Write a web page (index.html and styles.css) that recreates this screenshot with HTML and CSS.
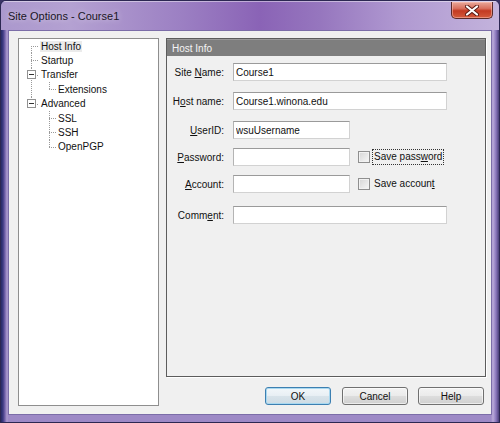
FILE: index.html
```html
<!doctype html>
<html>
<meta name="viewport" content="width=device-width, initial-scale=1">

<head>
  <title>Site Options - Course1</title>
  <link rel="stylesheet" href="styles.css">
</head>

<body>
  <div class="window">
    <div class="titlebar">
      <span class="title">Site Options - Course1</span>
      <span class="close">
        <svg width="14" height="11" viewBox="0 0 14 11">
          <path d="M2 1.5 L12 9.5 M12 1.5 L2 9.5" stroke="#5a1a14" stroke-width="4" stroke-linecap="round" />
          <path d="M2 1.5 L12 9.5 M12 1.5 L2 9.5" stroke="#ffffff" stroke-width="2.2" stroke-linecap="round" />
        </svg>
      </span>
    </div>
    <div class="client">
      <!-- settings tree -->
      <div class="tree">
        <div class="node root first"><span class="sel">Host Info</span></div>
        <div class="node root">Startup</div>
        <div class="node root toggled"><i class="toggle"></i>Transfer</div>
        <div class="group cont">
          <div class="node child last">Extensions</div>
        </div>
        <div class="node root toggled last"><i class="toggle"></i>Advanced</div>
        <div class="group">
          <div class="node child">SSL</div>
          <div class="node child">SSH</div>
          <div class="node child last">OpenPGP</div>
        </div>
      </div>
      <div class="main">
        <div class="panel">
          <div class="panel-head">Host Info</div>
          <form class="form" name="hostinfo">
            <div class="field">
              <label>Site <u>N</u>ame:</label>
              <input type="text" class="wide" value="Course1">
            </div>
            <div class="field">
              <label>H<u>o</u>st name:</label>
              <input type="text" class="wide" value="Course1.winona.edu">
            </div>
            <div class="field">
              <label><u>U</u>serID:</label>
              <input type="text" class="short" value="wsuUsername">
            </div>
            <div class="field tight">
              <label><u>P</u>assword:</label>
              <input type="password" class="short">
              <span class="check"></span>
              <span class="check-label focus">Save pass<u>w</u>ord</span>
            </div>
            <div class="field tight">
              <label><u>A</u>ccount:</label>
              <input type="text" class="short">
              <span class="check"></span>
              <span class="check-label">Save accoun<u>t</u></span>
            </div>
            <div class="field loose">
              <label>Comm<u>e</u>nt:</label>
              <input type="text" class="wide">
            </div>
          </form>
        </div>
        <div class="buttons">
          <button class="btn default">OK</button>
          <button class="btn">Cancel</button>
          <button class="btn">Help</button>
        </div>
      </div>
    </div>
  </div>
</body>

</html>
```

FILE: styles.css
```css
html,
body {
  margin: 0;
  padding: 0;
  background: #3a3366;
}

body {
  font: 10px "Liberation Sans", Arial, sans-serif;
  color: #111;
}

/* Window frame */
.window {
  width: 500px;
  height: 423px;
  box-sizing: border-box;
  border: 1px solid #2c2752;
  border-radius: 6px 6px 0 0;
  display: flex;
  flex-direction: column;
  overflow: hidden;
  background: linear-gradient(to right, #262a66 0, #3e3a82 2px, #7664ac 4px, #ad9dd0 6px, #9d89c6 7px,
      #9d89c6 calc(100% - 8px), #b9a9d9 calc(100% - 6px), #8a76bc calc(100% - 3px), #4a3e78 100%);
}

.titlebar {
  height: 29px;
  flex: none;
  display: flex;
  justify-content: space-between;
  background: linear-gradient(to right, #ab98cd 0%, #b4a1d2 14%, #9c80c3 36%, #8a63b6 52%, #9676be 64%, #b099d1 80%, #c3b3dc 100%);
  box-shadow: inset 0 1px 0 rgba(255, 255, 255, 0.45);
}

.title {
  align-self: center;
  padding: 1px 0 0 7px;
  font: 11px "Liberation Sans", Arial, sans-serif;
  color: #1b1626;
  text-shadow: 0 0 6px rgba(255, 255, 255, 0.6);
}

.close {
  width: 42px;
  height: 17px;
  margin: 1px 6px 0 0;
  box-sizing: border-box;
  border: 1px solid #5a2a2a;
  border-top: none;
  border-radius: 0 0 5px 5px;
  background: linear-gradient(#e9a89a 0%, #d9705e 40%, #c33a22 55%, #d45a3c 100%);
  box-shadow: inset 0 0 0 1px rgba(255, 200, 190, 0.5);
  display: flex;
  align-items: center;
  justify-content: center;
}

/* Dialog body */
.client {
  flex: 1;
  margin: 0 7px 7px 7px;
  border: 1px solid #7b6da8;
  background: #f0f0f0;
  display: flex;
  gap: 7px;
  padding: 7px 5px 0 9px;
}

/* Tree view */
.tree {
  width: 141px;
  height: 368px;
  box-sizing: border-box;
  border: 1px solid #8e8e8e;
  background: #fff;
  --dotv: repeating-linear-gradient(to bottom, #9a9a9a 0 1px, transparent 1px 2px);
  --doth: repeating-linear-gradient(to right, #9a9a9a 0 1px, transparent 1px 2px);
}

.node {
  height: 14.4px;
  display: flex;
  align-items: center;
  white-space: nowrap;
  background-image: var(--doth), var(--dotv);
  background-repeat: no-repeat;
  background-size: 8px 1px, 1px 100%;
}

.node.root {
  padding-left: 22px;
  background-position: 12px 7px, 12px 0;
}

.node.root.first {
  background-position: 12px 7px, 12px 7px;
}

.node.root.last,
.node.child.last {
  background-size: 8px 1px, 1px 8px;
}

.node.root.toggled {
  padding-left: 0;
}

.node.child {
  padding-left: 39px;
  background-position: 30px 7px, 30px 0;
}

.group.cont {
  background: var(--dotv) 12px 0 / 1px 100% no-repeat;
}

.toggle {
  width: 9px;
  height: 9px;
  box-sizing: border-box;
  margin: 0 5px 0 8px;
  border: 1px solid #919191;
  background: linear-gradient(#333, #333) center / 5px 1px no-repeat, #fff;
}

.sel {
  background: #ebebeb;
  padding: 0 1px;
  margin-left: -1px;
}

/* Right side */
.main {
  flex: 1;
  display: flex;
  flex-direction: column;
}

.panel {
  height: 339px;
  box-sizing: border-box;
  border: 1px solid #5c5c5c;
  box-shadow: 1px 1px 0 #fff;
}

.panel-head {
  height: 17px;
  line-height: 17px;
  padding-left: 5px;
  background: #7e7e7e;
  color: #f4f4f4;
  border-top: 1px solid #9a9a9a;
  box-sizing: border-box;
}

.form {
  margin: 0;
  padding-top: 7px;
}

.field {
  display: flex;
  align-items: center;
  height: 18px;
  margin-top: 11px;
}

.field:first-child {
  margin-top: 0;
}

.field.tight {
  margin-top: 9px;
}

.field.loose {
  margin-top: 13px;
}

.field label {
  width: 57px;
  margin-right: 9px;
  text-align: right;
}

.field input {
  height: 18px;
  box-sizing: border-box;
  margin: 0;
  padding: 0 2px;
  border: 1px solid #d2d2d2;
  border-top-color: #9a9a9a;
  border-left-color: #b4b4b4;
  background: #fff;
  font: 10px "Liberation Sans", Arial, sans-serif;
  color: #111;
  outline: none;
}

input.wide {
  width: 214px;
}

input.short {
  width: 117px;
}

.check {
  width: 12px;
  height: 12px;
  box-sizing: border-box;
  margin-left: 8px;
  border: 1px solid #8f8f8f;
  background: linear-gradient(135deg, #d6d6d6, #f7f7f7);
  box-shadow: inset 0 0 0 1px #f2f2f2;
}

.check-label {
  margin-left: 2px;
  padding: 1px 1px 2px;
  border: 1px dotted transparent;
}

.check-label.focus {
  border-color: #333;
}

/* Dialog buttons */
.buttons {
  display: flex;
  justify-content: flex-end;
  margin: 10px 2px 0 0;
}

.btn {
  width: 66px;
  height: 18px;
  margin-left: 11px;
  padding: 0;
  border: 1px solid #707070;
  border-radius: 3px;
  background: linear-gradient(#f3f3f3 0%, #ebebeb 48%, #dddddd 52%, #cfcfcf 100%);
  font: 10px "Liberation Sans", Arial, sans-serif;
  color: #111;
  box-shadow: inset 0 0 0 1px rgba(255, 255, 255, 0.6);
}

.btn:last-child {
  margin-left: 10px;
}

.btn.default {
  border-color: #3c7fb1;
  background: linear-gradient(#f2f7fa 0%, #e8eff4 48%, #d8e3ea 52%, #cddbe4 100%);
  box-shadow: inset 0 0 0 1px #a8d8f0;
}
```
